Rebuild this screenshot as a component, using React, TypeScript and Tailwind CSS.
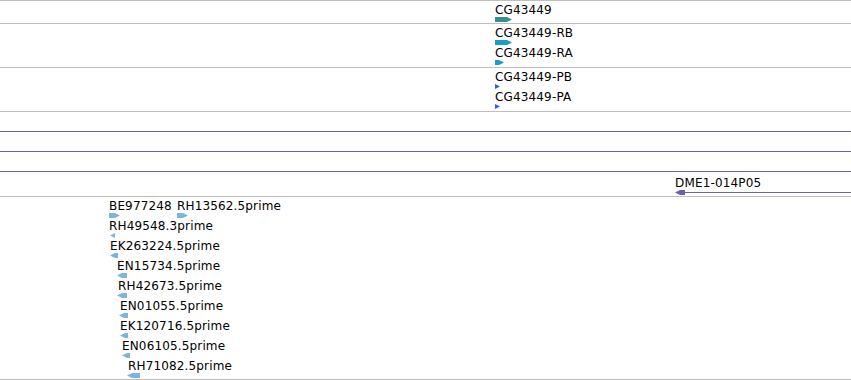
import React from 'react';

type Glyph = {
  w: number;
  dir: 'right' | 'left';
  color: string;
  h?: number;
};

type Feature = {
  label: string;
  x: number;
  glyph: Glyph;
  gx?: number;
};

const Arrow: React.FC<Glyph> = ({ w, dir, color, h = 5 }) => {
  const tip = Math.min(5, w);
  const pts =
    dir === 'right'
      ? `0,0 ${w - tip},0 ${w},${h / 2} ${w - tip},${h} 0,${h}`
      : `${w},0 ${tip},0 0,${h / 2} ${tip},${h} ${w},${h}`;
  return (
    <svg width={w} height={h} className="block">
      <polygon points={pts} fill={color} />
    </svg>
  );
};

// one feature = label line + glyph, 20px pitch
const FeatureBlock: React.FC<{ f: Feature; width?: number }> = ({ f, width }) => (
  <div className="flex flex-col shrink-0" style={{ width }}>
    <span className="block h-[12px] leading-[12px] text-[12px] tracking-[0.15px] text-black whitespace-nowrap">
      {f.label}
    </span>
    <div className="mt-[1px] h-[5px]" style={{ marginLeft: (f.gx ?? f.x) - f.x }}>
      <Arrow {...f.glyph} />
    </div>
  </div>
);

const Row: React.FC<{ items: Feature[] }> = ({ items }) => (
  <div className="flex h-[20px]" style={{ paddingLeft: items[0].x }}>
    {items.map((f, i) => (
      <FeatureBlock key={f.label} f={f} width={items[i + 1] ? items[i + 1].x - f.x : undefined} />
    ))}
  </div>
);

const teal = '#3a8e8e';
const cyan = '#1a9cc4';
const blue = '#3262d2';
const est = '#7cb4dc';
const purple = '#7060a8';

const estRows: Feature[][] = [
  [
    { label: 'BE977248', x: 109, glyph: { w: 11, dir: 'right', color: est, h: 5 } },
    { label: 'RH13562.5prime', x: 177, glyph: { w: 11, dir: 'right', color: est, h: 5 } },
  ],
  [{ label: 'RH49548.3prime', x: 109, gx: 110, glyph: { w: 5, dir: 'left', color: est, h: 5 } }],
  [{ label: 'EK263224.5prime', x: 110, gx: 110, glyph: { w: 8, dir: 'left', color: est, h: 5 } }],
  [{ label: 'EN15734.5prime', x: 117, gx: 117, glyph: { w: 10, dir: 'left', color: est, h: 5 } }],
  [{ label: 'RH42673.5prime', x: 118, gx: 117, glyph: { w: 10, dir: 'left', color: est, h: 5 } }],
  [{ label: 'EN01055.5prime', x: 120, gx: 119, glyph: { w: 9, dir: 'left', color: est, h: 5 } }],
  [{ label: 'EK120716.5prime', x: 120, gx: 120, glyph: { w: 8, dir: 'left', color: est, h: 5 } }],
  [{ label: 'EN06105.5prime', x: 122, gx: 122, glyph: { w: 8, dir: 'left', color: est, h: 5 } }],
  [{ label: 'RH71082.5prime', x: 128, gx: 127, glyph: { w: 13, dir: 'left', color: est, h: 5 } }],
];

export default function App() {
  return (
    <div
      className="w-[851px] h-[380px] bg-white overflow-hidden"
      style={{ fontFamily: '"DejaVu Sans", sans-serif' }}
    >
      {/* gene */}
      <div className="h-[24px] border-t border-b border-[#bfbfbf] pt-[3px]">
        <Row items={[{ label: 'CG43449', x: 495, glyph: { w: 17, dir: 'right', color: teal } }]} />
      </div>
      {/* transcripts */}
      <div className="h-[44px] border-b border-[#bfbfbf] pt-[3px]">
        <Row items={[{ label: 'CG43449-RB', x: 495, glyph: { w: 17, dir: 'right', color: cyan, h: 5 } }]} />
        <Row items={[{ label: 'CG43449-RA', x: 495, glyph: { w: 9, dir: 'right', color: cyan, h: 5 } }]} />
      </div>
      {/* proteins */}
      <div className="h-[44px] border-b border-[#bfbfbf] pt-[3px]">
        <Row items={[{ label: 'CG43449-PB', x: 495, glyph: { w: 5, dir: 'right', color: blue, h: 5 } }]} />
        <Row items={[{ label: 'CG43449-PA', x: 495, glyph: { w: 5, dir: 'right', color: blue, h: 5 } }]} />
      </div>
      {/* clones: long features run off both ends of the view */}
      <div className="h-[85px] border-b border-[#bfbfbf] flex flex-col">
        <div className="h-[19px] shrink-0" />
        <div className="h-[1px] shrink-0 bg-[#7060a8]" />
        <div className="h-[19px] shrink-0" />
        <div className="h-[1px] shrink-0 bg-[#7060a8]" />
        <div className="h-[19px] shrink-0" />
        <div className="h-[1px] shrink-0 bg-[#7060a8]" />
        <div className="pt-[5px] pl-[675px]">
          <span className="block h-[12px] leading-[12px] text-[12px] tracking-[0.15px] text-black whitespace-nowrap">
            DME1-014P05
          </span>
          <div className="mt-[1px] flex items-center h-[5px]">
            <svg width={10} height={5} className="block shrink-0">
              <polygon points="0,2.5 5,0 10,0 10,5 5,5" fill={purple} />
            </svg>
            <div className="h-[1px] flex-1 bg-[#7060a8]" />
          </div>
        </div>
      </div>
      {/* ESTs */}
      <div className="h-[183px] border-b border-[#bfbfbf] pt-[3px] overflow-hidden">
        {estRows.map((r, i) => (
          <Row key={i} items={r} />
        ))}
      </div>
    </div>
  );
}
